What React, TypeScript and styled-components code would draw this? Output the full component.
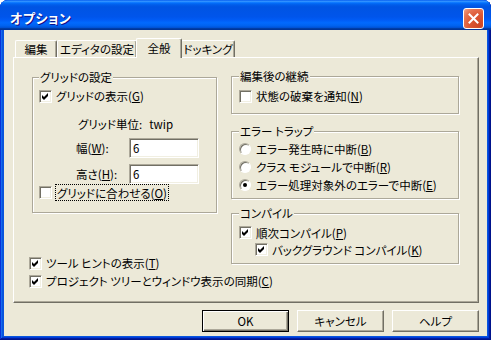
import styled, { createGlobalStyle } from "styled-components";

const Global = createGlobalStyle`
	* {
		box-sizing: border-box;
	}
	body {
		margin: 0;
		background: #fff;
	}
`;

const Window = styled.div`
	width: 491px;
	height: 340px;
	display: flex;
	flex-direction: column;
	border-radius: 8px 8px 0 0;
	overflow: hidden;
	background: #0855dd;
	box-shadow: inset -1px -1px #00138c, inset 1px 1px #0831d9, inset -2px -2px #001ea0, inset 2px 2px #166aee, inset -3px -3px #003bda,
		inset 3px 3px #0855dd;
	font-family: "Noto Sans CJK JP", "Noto Sans", sans-serif;
	font-feature-settings: "palt";
	font-size: 11.5px;
	line-height: 14px;
	color: #000;
`;

const TitleBar = styled.div`
	height: 30px;
	flex-shrink: 0;
	display: flex;
	align-items: center;
	justify-content: space-between;
	padding: 6px 7px 0 10px;
	background: linear-gradient(
		180deg,
		#0058ee 0%,
		#3593ff 4%,
		#288eff 6%,
		#127dff 8%,
		#036ffc 10%,
		#0262ee 14%,
		#0057e5 20%,
		#0054e3 24%,
		#0055eb 56%,
		#005bf5 66%,
		#026afe 76%,
		#0062ef 86%,
		#0052d6 92%,
		#0040ab 94%,
		#003092 100%
	);
`;

const Title = styled.span`
	color: #fff;
	font-weight: bold;
	font-size: 13px;
	letter-spacing: 0.5px;
	text-shadow: 1px 1px #0f1089;
`;

const CloseButton = styled.div`
	width: 21px;
	height: 21px;
	border: 1px solid #fff;
	border-radius: 3px;
	display: flex;
	align-items: center;
	justify-content: center;
	background: radial-gradient(circle at 85% 85%, #cc4625 0%, #dc5632 45%, #e67452 75%, #f0a38a 100%);
`;

const Body = styled.div`
	flex: 1;
	margin: 0 4px 4px;
	padding: 8px 8px 0 9px;
	background: #ece9d8;
	display: flex;
	flex-direction: column;
`;

const TabRow = styled.div`
	display: flex;
	align-items: flex-end;
	height: 19px;
	padding-left: 2px;
`;

const Tab = styled.div<{ $active?: boolean; $w: number }>`
	width: ${p => p.$w}px;
	height: ${p => (p.$active ? 20 : 17)}px;
	margin: ${p => (p.$active ? "0 -1px -1px -1px" : "0")};
	position: relative;
	z-index: ${p => (p.$active ? 1 : 0)};
	display: flex;
	align-items: center;
	justify-content: center;
	padding-bottom: ${p => (p.$active ? 2 : 0)}px;
	background: #ece9d8;
	border-top: 1px solid #fff;
	border-left: 1px solid #fff;
	border-right: 1px solid #716f64;
	border-radius: 2px 2px 0 0;
	box-shadow: inset -1px 0 #aca899;
	white-space: nowrap;
`;

const Panel = styled.div`
	width: 466px;
	height: 246px;
	border: 1px solid;
	border-color: #fff #716f64 #716f64 #fff;
	box-shadow: inset -1px -1px #aca899;
	padding: 19px 0 0 18px;
	display: grid;
	grid-template-columns: 185px 228px;
	column-gap: 14px;
	align-items: start;
`;

const Column = styled.div<{ $shift?: number }>`
	display: flex;
	flex-direction: column;
	margin-top: ${p => p.$shift || 0}px;
`;

const GroupBox = styled.div<{ $gap?: number; $pad: number; $inset: number }>`
	margin-top: ${p => p.$gap || 0}px;
	border: 1px solid #aca899;
	box-shadow: 1px 1px 0 #fff, inset 1px 1px 0 #fff;
	padding: 0 0 ${p => p.$pad}px ${p => p.$inset}px;
`;

const Caption = styled.div`
	width: fit-content;
	margin: -8px 0 0 0;
	padding: 0 1px;
	height: 14px;
	background: #ece9d8;
	white-space: nowrap;
`;

const CheckRow = styled.div<{ $top?: number; $h?: number; $indent?: number }>`
	display: flex;
	align-items: center;
	gap: 4px;
	height: ${p => p.$h || 14}px;
	margin-top: ${p => p.$top || 0}px;
	margin-left: ${p => p.$indent || 0}px;
	white-space: nowrap;
`;

const Box = styled.span`
	width: 13px;
	height: 13px;
	flex-shrink: 0;
	display: flex;
	align-items: center;
	justify-content: center;
	background: #fff;
	border: 1px solid;
	border-color: #aca899 #fff #fff #aca899;
	box-shadow: inset 1px 1px #716f64, inset -1px -1px #f1efe2;
`;

const Radio = styled.span<{ $on?: boolean }>`
	width: 12px;
	height: 12px;
	flex-shrink: 0;
	margin-right: 1px;
	border-radius: 50%;
	background: #fff;
	border: 1px solid;
	border-color: #aca899 #fff #fff #aca899;
	box-shadow: inset 1px 1px #716f64;
	display: flex;
	align-items: center;
	justify-content: center;
	&::after {
		content: "";
		width: 4px;
		height: 4px;
		border-radius: 50%;
		background: ${p => (p.$on ? "#000" : "transparent")};
	}
`;

const FocusLabel = styled.span`
	outline: 1px dotted #000;
	outline-offset: 0;
	padding: 1px 1px 0;
`;

const UnitRow = styled.div`
	display: flex;
	align-items: center;
	height: 14px;
	margin: 14px 0 0 39px;
	white-space: nowrap;
`;

const UnitLabel = styled.span`
	margin-right: 7px;
`;

const FieldRow = styled.div<{ $top: number }>`
	display: flex;
	align-items: center;
	height: 20px;
	margin: ${p => p.$top}px 0 0 37px;
`;

const FieldLabel = styled.span`
	width: 53px;
	white-space: nowrap;
`;

const Input = styled.div`
	width: 70px;
	height: 20px;
	padding: 2px 0 0 3px;
	background: #fff;
	border: 1px solid;
	border-color: #aca899 #fff #fff #aca899;
	box-shadow: inset 1px 1px #716f64, inset -1px -1px #f1efe2;
`;

const LowerChecks = styled.div`
	display: flex;
	flex-direction: column;
	margin: 41px 0 0 -3px;
`;

const ButtonRow = styled.div`
	display: flex;
	justify-content: flex-end;
	gap: 8px;
	margin-top: 7px;
	width: 466px;
`;

const Button = styled.div<{ $default?: boolean }>`
	width: 87px;
	height: 22px;
	display: flex;
	align-items: center;
	justify-content: center;
	background: #ece9d8;
	border: 1px solid;
	border-color: ${p => (p.$default ? "#000" : "#fff #716f64 #716f64 #fff")};
	box-shadow: ${p => (p.$default ? "inset 1px 1px #fff, inset -1px -1px #716f64, inset -2px -2px #aca899" : "inset -1px -1px #aca899")};
`;

const Check = ({ on }: { on?: boolean }) => (
	<Box>
		{on && (
			<svg width="7" height="7" viewBox="0 0 7 7">
				<path d="M0 2 L2 4 L6 0 L6 3 L2 7 L0 5 Z" fill="#000" />
			</svg>
		)}
	</Box>
);

const tabs = [
	{ label: "編集", w: 42 },
	{ label: "エディタの設定", w: 80 },
	{ label: "全般", w: 46, active: true },
	{ label: "ドッキング", w: 54 },
];

function App() {
	return (
		<>
			<Global />
			<Window>
				<TitleBar>
					<Title>オプション</Title>
					<CloseButton>
						<svg width="11" height="11" viewBox="0 0 11 11">
							<path d="M1.5 1.5 L9.5 9.5 M9.5 1.5 L1.5 9.5" stroke="#fff" strokeWidth="2" strokeLinecap="square" />
						</svg>
					</CloseButton>
				</TitleBar>
				<Body>
					<TabRow>
						{tabs.map(t => (
							<Tab key={t.label} $w={t.w} $active={t.active}>
								{t.label}
							</Tab>
						))}
					</TabRow>
					<Panel>
						<Column>
							<GroupBox $pad={13} $inset={6}>
								<Caption>グリッドの設定</Caption>
								<CheckRow $top={5}>
									<Check on />
									<span>
										グリッドの表示(<u>G</u>)
									</span>
								</CheckRow>
								<UnitRow>
									<UnitLabel>グリッド単位:</UnitLabel>
									<span>twip</span>
								</UnitRow>
								<FieldRow $top={7}>
									<FieldLabel>
										幅(<u>W</u>):
									</FieldLabel>
									<Input>6</Input>
								</FieldRow>
								<FieldRow $top={6}>
									<FieldLabel>
										高さ(<u>H</u>):
									</FieldLabel>
									<Input>6</Input>
								</FieldRow>
								<CheckRow $top={1}>
									<Check />
									<FocusLabel>
										グリッドに合わせる(<u>O</u>)
									</FocusLabel>
								</CheckRow>
							</GroupBox>
							<LowerChecks>
								<CheckRow $h={18}>
									<Check on />
									<span>
										ツール ヒントの表示(<u>T</u>)
									</span>
								</CheckRow>
								<CheckRow $h={18}>
									<Check on />
									<span>
										プロジェクト ツリーとウィンドウ表示の同期(<u>C</u>)
									</span>
								</CheckRow>
							</LowerChecks>
						</Column>
						<Column $shift={-1}>
							<GroupBox $pad={10} $inset={7}>
								<Caption>編集後の継続</Caption>
								<CheckRow $top={6}>
									<Check />
									<span>
										状態の破棄を通知(<u>N</u>)
									</span>
								</CheckRow>
							</GroupBox>
							<GroupBox $gap={17} $pad={4} $inset={7}>
								<Caption>エラー トラップ</Caption>
								<CheckRow $top={2} $h={18}>
									<Radio />
									<span>
										エラー発生時に中断(<u>B</u>)
									</span>
								</CheckRow>
								<CheckRow $h={18}>
									<Radio />
									<span>
										クラス モジュールで中断(<u>R</u>)
									</span>
								</CheckRow>
								<CheckRow $h={18}>
									<Radio $on />
									<span>
										エラー処理対象外のエラーで中断(<u>E</u>)
									</span>
								</CheckRow>
							</GroupBox>
							<GroupBox $gap={14} $pad={5} $inset={7}>
								<Caption>コンパイル</Caption>
								<CheckRow $top={4} $h={17}>
									<Check on />
									<span>
										順次コンパイル(<u>P</u>)
									</span>
								</CheckRow>
								<CheckRow $h={17} $indent={16}>
									<Check on />
									<span>
										バックグラウンド コンパイル(<u>K</u>)
									</span>
								</CheckRow>
							</GroupBox>
						</Column>
					</Panel>
					<ButtonRow>
						<Button $default>OK</Button>
						<Button>キャンセル</Button>
						<Button>ヘルプ</Button>
					</ButtonRow>
				</Body>
			</Window>
		</>
	);
}

export default App;
